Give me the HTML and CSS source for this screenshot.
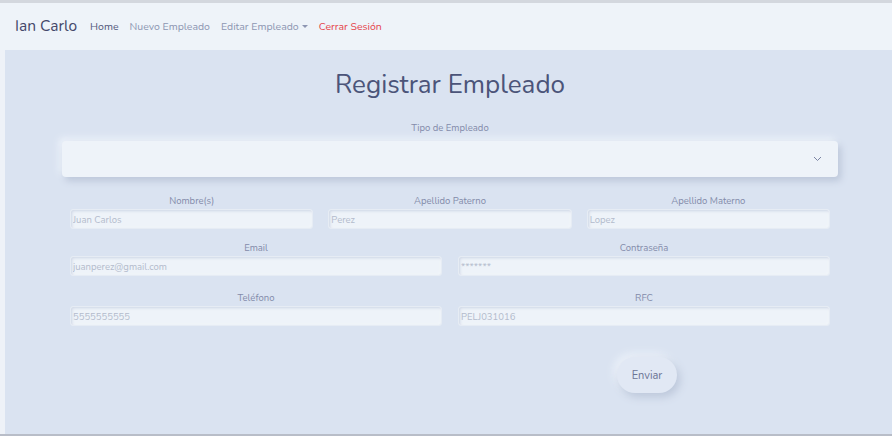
FILE: index.html
```html
<!DOCTYPE html>
<html lang="es">
<head>
<meta charset="utf-8">
<title>Registrar Empleado</title>
<link rel="stylesheet" href="styles.css">
</head>
<body>
<div class="topline"></div>
<nav class="navbar">
  <span class="brand">Ian Carlo</span>
  <ul class="nav-links">
    <li><a class="nav-link active" href="#">Home</a></li>
    <li><a class="nav-link" href="#">Nuevo Empleado</a></li>
    <li><a class="nav-link dropdown" href="#">Editar Empleado<span class="caret"></span></a></li>
    <li><a class="nav-link danger" href="#">Cerrar Sesión</a></li>
  </ul>
</nav>
<main class="page">
  <div class="container">
    <h1 class="title">Registrar Empleado</h1>
    <div class="field-full">
      <label class="label">Tipo de Empleado</label>
      <div class="select">
        <svg class="chevron" width="9" height="6" viewBox="0 0 9 6"><path d="M1 1l3.5 3.5L8 1" fill="none" stroke="#7b84a3" stroke-width="1"/></svg>
      </div>
    </div>
    <div class="form">
      <div class="row three">
        <div class="field"><label class="label">Nombre(s)</label><input class="input" placeholder="Juan Carlos"></div>
        <div class="field"><label class="label">Apellido Paterno</label><input class="input" placeholder="Perez"></div>
        <div class="field"><label class="label">Apellido Materno</label><input class="input" placeholder="Lopez"></div>
      </div>
      <div class="row two first">
        <div class="field"><label class="label">Email</label><input class="input" placeholder="juanperez@gmail.com"></div>
        <div class="field"><label class="label">Contraseña</label><input class="input pw" placeholder="*******"></div>
      </div>
      <div class="row two">
        <div class="field"><label class="label">Teléfono</label><input class="input" placeholder="5555555555"></div>
        <div class="field"><label class="label">RFC</label><input class="input" placeholder="PELJ031016"></div>
      </div>
      <div class="row two actions">
        <div></div>
        <div class="btn-cell"><button class="btn">Enviar</button></div>
      </div>
    </div>
  </div>
</main>
<div class="bottomline"></div>
</body>
</html>
```
FILE: styles.css
```css
* { box-sizing: border-box; }
html, body { margin: 0; padding: 0; }
body {
  font-family: "Nunito", "Lato", "Noto Sans", sans-serif;
  background: #dae3f1;
  color: #44476a;
  height: 436px;
  display: flex;
  flex-direction: column;
}
.topline { height: 3px; background: #d3d7de; }
.navbar {
  height: 47px;
  background: #eef3f9;
  display: flex;
  align-items: center;
  padding: 0 15px;
}
.brand {
  font-size: 15.5px;
  color: #44476a;
  margin-right: 13px;
  padding-bottom: 2px;
}
.nav-links {
  list-style: none;
  margin: 0;
  padding: 0;
  display: flex;
  gap: 11px;
  padding-bottom: 4px;
}
.nav-link {
  font-size: 10.5px;
  color: #8d96b2;
  text-decoration: none;
}
.nav-link.active { color: #53597c; }
.nav-link.danger { color: #e5434b; }
.caret {
  display: inline-block;
  width: 0; height: 0;
  margin-left: 3px;
  vertical-align: 2px;
  border-left: 3px solid transparent;
  border-right: 3px solid transparent;
  border-top: 3.5px solid #8d96b2;
}
.page {
  flex: 1;
  border-left: 5px solid #eef2f8;
  padding: 0 54px 0 57px;
}
.container { width: 100%; }
.title {
  margin: 16px 0 0;
  text-align: center;
  font-weight: 400;
  font-size: 26px;
  line-height: 38px;
  color: #4b5479;
}
.field-full { margin-top: 17px; }
.label {
  display: block;
  text-align: center;
  font-size: 9.5px;
  line-height: 13px;
  color: #838baa;
}
.select {
  margin-top: 7px;
  height: 36px;
  background: #eef3f9;
  border-radius: 4px;
  box-shadow: 3px 4px 7px #bcc7da, -3px -3px 7px #eef3fa;
  display: flex;
  align-items: center;
  justify-content: flex-end;
  padding-right: 16px;
}
.form { padding: 0 8px; margin-top: 17px; }
.row { display: grid; }
.row.three { grid-template-columns: 1fr 1fr 1fr; column-gap: 15px; }
.row.two { grid-template-columns: 1fr 1fr; column-gap: 16px; margin-top: 15px; }
.row.two.first { margin-top: 12px; }
.row.two.actions { margin-top: 31px; }
.field { display: flex; flex-direction: column; }
.field .label { margin-bottom: 2px; }
.input {
  height: 20px;
  width: 100%;
  border: 1px solid #e6ecf4;
  border-radius: 3px;
  background: #eef3f9;
  box-shadow: inset 1px 1px 3px #cdd6e5, inset -1px -1px 2px #f6f9fc;
  font-family: inherit;
  font-size: 9.5px;
  padding: 0 2px;
  color: #44476a;
  outline: none;
}
.input::placeholder { color: #b3bbcc; }
.btn-cell { display: flex; justify-content: center; }
.btn {
  width: 60px;
  height: 36px;
  border: none;
  border-radius: 18px;
  background: #e1e8f4;
  box-shadow: 3px 4px 8px #bcc7da, -3px -3px 8px #eef3fa;
  font-family: inherit;
  font-size: 11px;
  color: #6b7495;
  padding: 0;
  margin-left: 6px;
}
.bottomline { height: 2px; background: #b8bdc8; }
```
